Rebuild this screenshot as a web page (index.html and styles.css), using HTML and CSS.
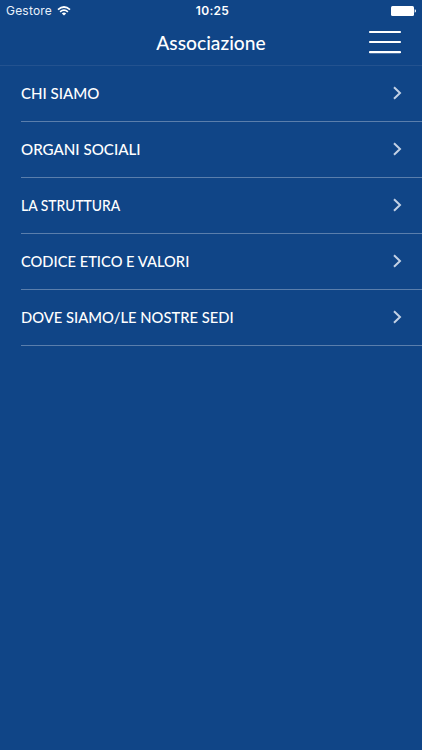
FILE: index.html
```html
<!DOCTYPE html>
<html lang="it">
<head>
<meta charset="utf-8">
<title>Associazione</title>
<link rel="stylesheet" href="styles.css">
</head>
<body>
<header class="header">
  <div class="status">
    <div class="carrier"><span class="carrier-name">Gestore</span>
      <svg class="wifi" width="14" height="10" viewBox="0 0 14 10"><path d="M1 3.6Q7-1.6 13 3.6M3.1 5.8Q7 2.5 10.9 5.8" fill="none" stroke="#fff" stroke-width="1.7"/><path d="M7 9.6 4.8 7.4Q7 5.7 9.2 7.4Z" fill="#fff"/></svg>
    </div>
    <span class="time">10:25</span>
    <svg class="battery" width="25" height="10" viewBox="0 0 25 10"><rect width="23" height="10" rx="1.5" fill="#fff"/><path d="M23.7 3.3q1.3.3 1.3 1.7t-1.3 1.7z" fill="#fff"/></svg>
  </div>
  <div class="bar">
    <h1 class="title">Associazione</h1>
    <svg class="menu" width="34" height="24" viewBox="0 0 34 24"><path d="M2 2h30M2 12h30M2 22.2h30" stroke="#fff" stroke-width="2.2" stroke-linecap="round"/></svg>
  </div>
</header>
<main class="list">
  <a class="row"><span class="label chi">CHI SIAMO</span><svg class="chevron" width="10" height="14" viewBox="0 0 10 14"><path d="M2 1.2 8 7 2 12.8"/></svg></a>
  <a class="row"><span class="label organi">ORGANI SOCIALI</span><svg class="chevron" width="10" height="14" viewBox="0 0 10 14"><path d="M2 1.2 8 7 2 12.8"/></svg></a>
  <a class="row"><span class="label struttura">LA STRUTTURA</span><svg class="chevron" width="10" height="14" viewBox="0 0 10 14"><path d="M2 1.2 8 7 2 12.8"/></svg></a>
  <a class="row"><span class="label codice">CODICE ETICO E VALORI</span><svg class="chevron" width="10" height="14" viewBox="0 0 10 14"><path d="M2 1.2 8 7 2 12.8"/></svg></a>
  <a class="row"><span class="label dove">DOVE SIAMO/LE NOSTRE SEDI</span><svg class="chevron" width="10" height="14" viewBox="0 0 10 14"><path d="M2 1.2 8 7 2 12.8"/></svg></a>
</main>
</body>
</html>
```
FILE: styles.css
```css
* { box-sizing: border-box; }
body { margin: 0; min-height: 750px; background: #104587; color: #fff; font-family: Lato, sans-serif; }
.header { height: 66px; border-bottom: 1px solid #23528f; }
.status { height: 22px; padding: 0 6px; display: grid; grid-template-columns: 1fr auto 1fr; align-items: center; font: 12px/22px Inter, sans-serif; }
.carrier { display: flex; align-items: center; gap: 5px; color: #e8f1fb; }
.carrier-name { font-size: 12px; letter-spacing: .2px; }
.wifi { margin-top: -1px; }
.time { font-weight: 600; font-size: 12px; letter-spacing: .3px; padding-left: 3px; }
.battery { justify-self: end; }
.bar { height: 43px; display: grid; grid-template-columns: 1fr auto 1fr; align-items: center; padding-right: 20px; padding-left: 20px; }
.title { grid-column: 2; margin: -4px 0 0; font-size: 20px; line-height: 24px; font-weight: 500; transform: scaleX(.96); }
.menu { justify-self: end; margin-top: -3px; }
.row { display: flex; height: 56px; margin-left: 21px; padding-right: 20px; align-items: center; justify-content: space-between; border-bottom: 1px solid #5a7eac; }
.label { margin-top: -2px; font-size: 16px; line-height: 20px; font-weight: 500; white-space: nowrap; transform-origin: left center; }
.chi { transform: scaleX(.94); }
.organi { transform: scaleX(.945); }
.struttura { transform: scaleX(.868); }
.codice { transform: scaleX(.918); }
.dove { transform: scaleX(.922); }
.chevron { fill: none; stroke: #c3d1e5; stroke-width: 2; margin-top: -1px; }
```
